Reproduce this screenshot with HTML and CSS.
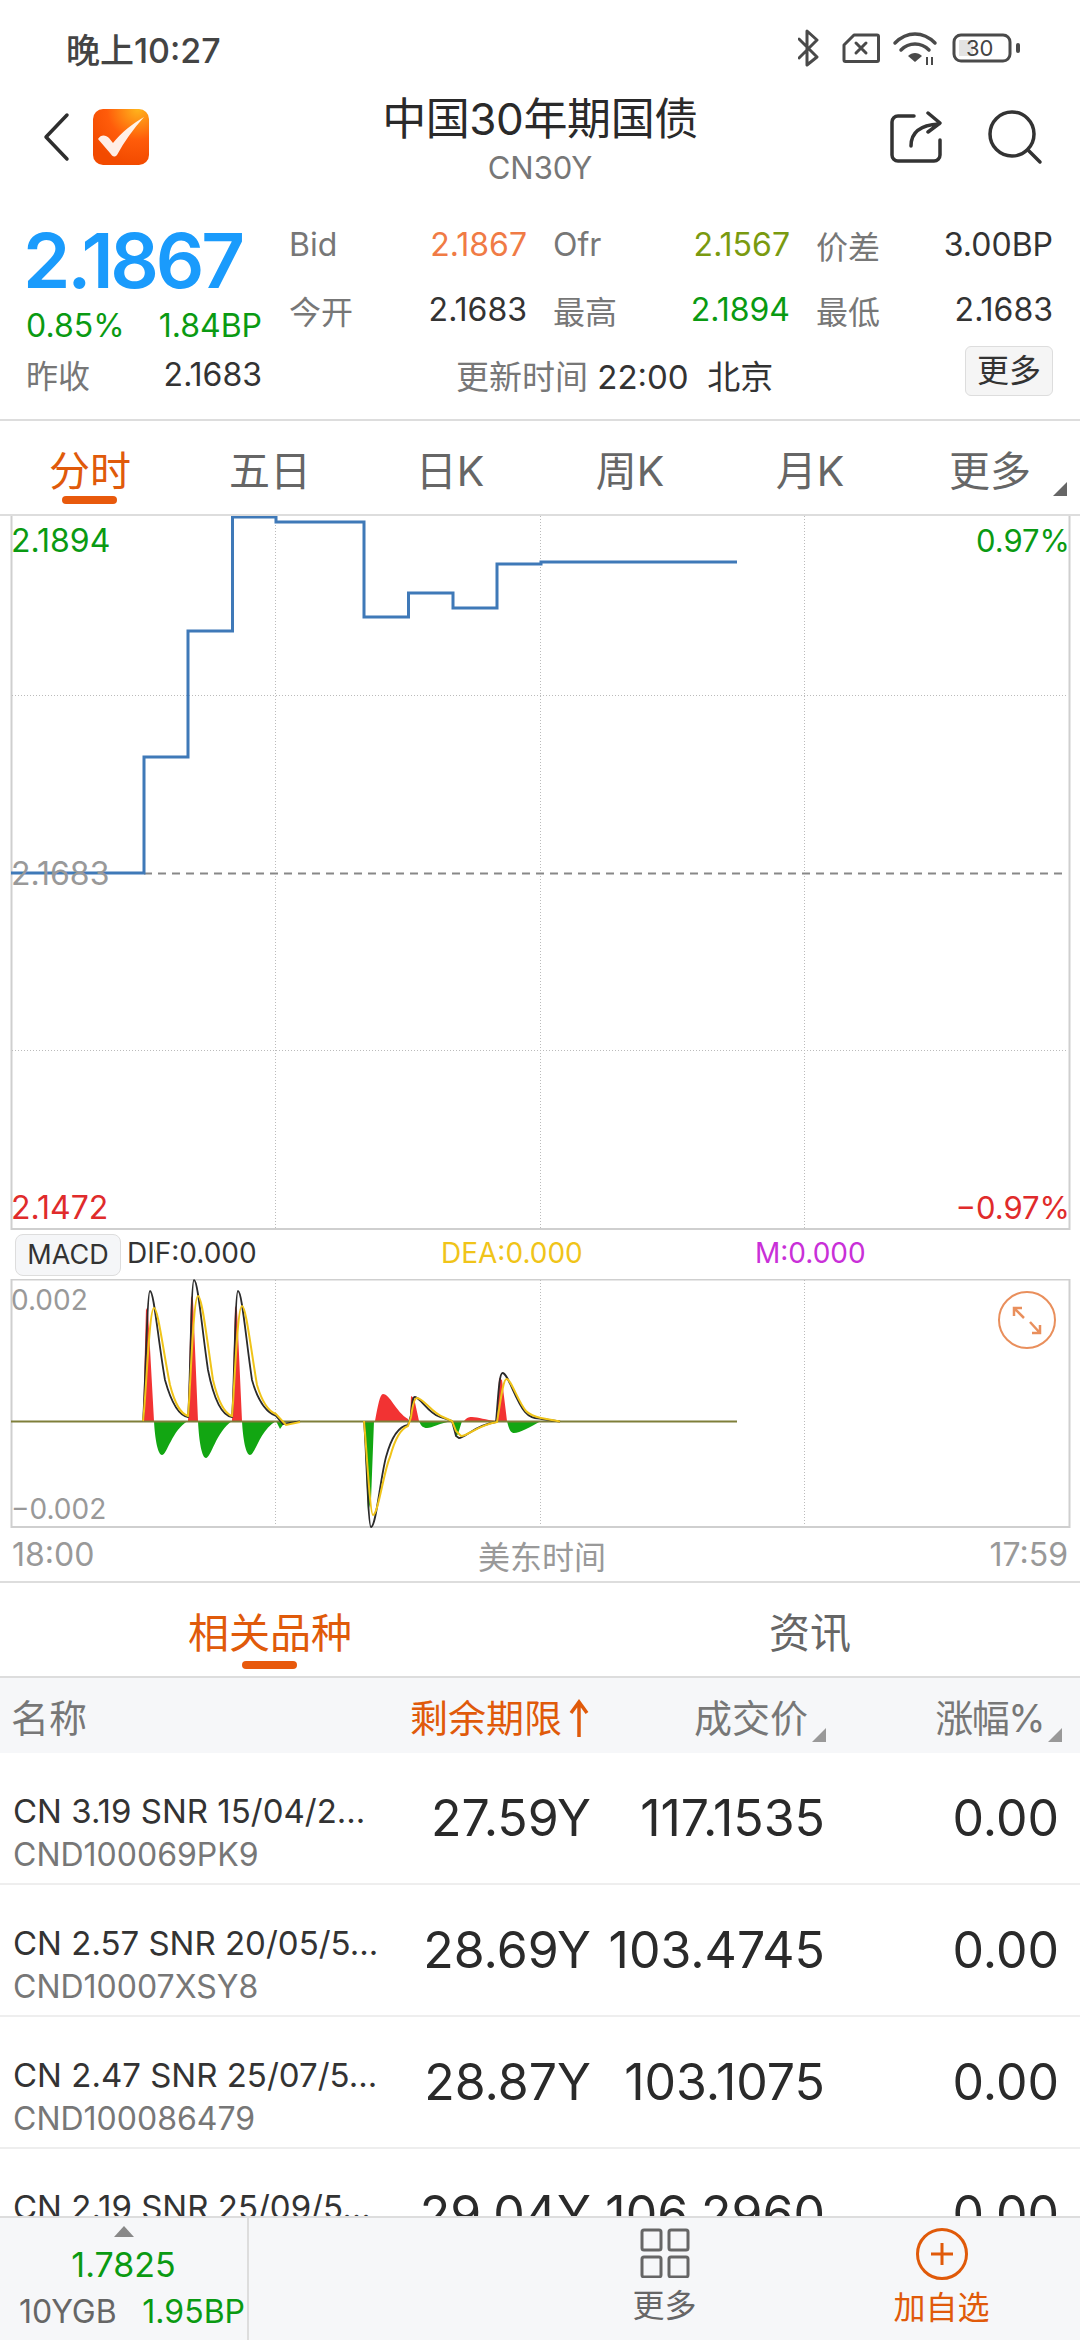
FILE: index.html
```html
<!DOCTYPE html>
<html lang="zh-CN">
<head>
    <meta charset="UTF-8">
    <meta name="viewport" content="width=device-width, initial-scale=1.0">
    <title>中国30年期国债</title>
    <link rel="stylesheet" href="styles.css">
</head>
<body>
<div class="page">
    <div class="status">
        <span class="status-time">晚上10:27</span>
        <svg class="status-icons" width="222" height="40" viewBox="798 28 222 40" fill="none" stroke="#4a4a4a" stroke-width="3">
            <path d="M799 39 L817 57 L807 65 V31 L817 40 L799 58" stroke-linejoin="round" stroke-linecap="round"/>
            <path d="M854 35 H877 a1.5 1.5 0 0 1 1.5 1.5 V60 a1.5 1.5 0 0 1 -1.5 1.5 H845.500 a1.500 1.500 0 0 1 -1.500 -1.500 V45 Z" stroke-linejoin="round"/>
            <path d="M856 43 L866 53 M866 43 L856 53" stroke-linecap="round"/>
            <path d="M895 43 C907 31 923 31 935 43" stroke-width="3.500" stroke-linecap="round"/>
            <path d="M901 50 C909 42 921 42 929 50" stroke-width="3.500" stroke-linecap="round"/>
            <path d="M908 56 L915 62 L922 56 C918 52 912 52 908 56 Z" fill="#4a4a4a" stroke="none"/>
            <path d="M927 57 V65 M932 57 V65" stroke-width="2"/>
            <rect x="954" y="35" width="56" height="26" rx="7"/>
            <rect x="959" y="40" width="14" height="16" fill="#e3e3e3" stroke="none"/>
            <rect x="1016" y="43" width="4" height="10" rx="2" fill="#4a4a4a" stroke="none"/>
        </svg>
        <span class="status-batt">30</span>
    </div>

    <div class="nav">
        <div class="nav-left">
            <svg width="30" height="50" viewBox="0 0 30 50" fill="none" stroke="#2e2e2e" stroke-width="3.500" stroke-linecap="round" stroke-linejoin="round">
                <path d="M24 3 L3 25 L24 47"/>
            </svg>
            <svg class="logo" width="56" height="56" viewBox="0 0 56 56">
                <defs>
                    <radialGradient id="logoBg" cx="0.8" cy="0" r="1">
                        <stop offset="0" stop-color="#ffb51c"/>
                        <stop offset="0.55" stop-color="#ff5c0a"/>
                        <stop offset="1" stop-color="#f24a00"/>
                    </radialGradient>
                </defs>
                <rect width="56" height="56" rx="10" fill="url(#logoBg)"/>
                <path d="M5 30 C8 25 13 26 16 29 L20 34 C29 23 39 15 51 8 C40 20 31 33 24 46 C21 49 19 47 17 44 C13 39 9 35 5 30 Z" fill="#fff" opacity="0.9"/>
            </svg>
        </div>
        <div class="nav-title">
            <div class="nav-name">中国30年期国债</div>
            <div class="nav-code">CN30Y</div>
        </div>
        <div class="nav-right">
            <svg width="52" height="52" viewBox="0 0 52 52" fill="none" stroke="#333" stroke-width="3.500" stroke-linecap="round" stroke-linejoin="round">
                <path d="M24 5 H8 a6 6 0 0 0 -6 6 V44 a6 6 0 0 0 6 6 H44 a6 6 0 0 0 6 -6 V29"/>
                <path d="M21 35 C21 22 30 14 49 13 M38 2 L50 12 L38 21"/>
            </svg>
            <svg width="56" height="56" viewBox="0 0 56 56" fill="none" stroke="#333" stroke-width="3.500" stroke-linecap="round">
                <circle cx="25" cy="25" r="22"/>
                <path d="M41 41 L53 53"/>
            </svg>
        </div>
    </div>

    <div class="quote">
        <div class="quote-left">
            <div class="last-price">2.1867</div>
            <div class="quote-pair up-text"><span>0.85%</span><span>1.84BP</span></div>
            <div class="quote-pair prev"><span class="lbl">昨收</span><span>2.1683</span></div>
        </div>
        <div class="quote-right">
            <div class="stat"><span class="lbl">Bid</span><span class="bid">2.1867</span></div>
            <div class="stat"><span class="lbl">Ofr</span><span class="ofr">2.1567</span></div>
            <div class="stat"><span class="lbl">价差</span><span>3.00BP</span></div>
            <div class="stat"><span class="lbl">今开</span><span>2.1683</span></div>
            <div class="stat"><span class="lbl">最高</span><span class="up-text">2.1894</span></div>
            <div class="stat"><span class="lbl">最低</span><span>2.1683</span></div>
            <div class="update-row">
                <span class="update-time"><span class="lbl">更新时间</span> 22:00&nbsp;&nbsp;北京</span>
                <span class="more-btn">更多</span>
            </div>
        </div>
    </div>

    <div class="period-tabs">
        <div class="tab active">分时</div>
        <div class="tab">五日</div>
        <div class="tab">日K</div>
        <div class="tab">周K</div>
        <div class="tab">月K</div>
        <div class="tab tab-more">更多</div>
    </div>

    <div class="price-chart">
        <svg class="chart-svg" width="1080" height="714" viewBox="0 516 1080 714" fill="none">
            <path d="M11.500 516 V1229 H1069.500 V516" stroke="#cfcfcf" stroke-width="2"/>
            <path d="M12 695.500 H1068 M12 1050.500 H1068 M275.500 516 V1228 M540.500 516 V1228 M804.500 516 V1228" stroke="#bbb" stroke-width="1" stroke-dasharray="1 2"/>
            <path d="M144 873.500 H1064" stroke="#888" stroke-width="2" stroke-dasharray="8 6"/>
            <path d="M11 873 H144 V757 H188 V631 H232.500 V517 H276 V522 H364 V617 H408.500 V593 H453 V608 H497 V564 H541 V562 H737" stroke="#3f79b8" stroke-width="3"/>
        </svg>
        <span class="chart-label hi-left">2.1894</span>
        <span class="chart-label hi-right">0.97%</span>
        <span class="chart-label mid-left">2.1683</span>
        <span class="chart-label lo-left">2.1472</span>
        <span class="chart-label lo-right">−0.97%</span>
    </div>

    <div class="macd-row">
        <span class="macd-btn">MACD</span>
        <span class="macd-val">DIF:0.000</span>
        <span class="macd-val dea">DEA:0.000</span>
        <span class="macd-val m">M:0.000</span>
    </div>

    <div class="macd-chart">
        <svg class="chart-svg" width="1080" height="249" viewBox="0 1279 1080 249" fill="none">
            <path d="M11.500 1528 V1279.500 H1069.500 V1528 M11 1527 H1070" stroke="#cfcfcf" stroke-width="2"/>
            <path d="M275.500 1280 V1526 M540.500 1280 V1526 M804.500 1280 V1526" stroke="#bbb" stroke-width="1" stroke-dasharray="1 2"/>
            <!-- red bars -->
            <path fill="#f23333" d="M143 1421 L146 1308 L148 1312 L154 1421 Z
                M188 1421 L191 1296 L193 1300 L198 1421 Z
                M232 1421 L235 1306 L237 1310 L242 1421 Z
                M375 1421 C378 1405 380 1394 383 1394 C390 1394 396 1412 408 1419 V1421 Z
                M410 1421 L411 1396 L414 1398 L419 1421 Z
                M464 1421 C467 1417 470 1417 472 1417 C478 1417 486 1420 496 1421 Z
                M497 1421 L499 1378 L502 1380 L507 1421 Z"/>
            <!-- green bars -->
            <path fill="#12a612" d="M154 1421 C155 1440 158 1455 162 1455 C167 1455 172 1430 188 1421 Z
                M198 1421 C199 1442 202 1458 206 1458 C211 1458 216 1432 232 1421 Z
                M242 1421 C243 1440 246 1455 250 1455 C255 1455 260 1430 276 1421 Z
                M276 1421 L280 1429 L285 1422 Z
                M364 1421 L368 1512 L371 1500 L374 1421 Z
                M419 1421 C421 1426 423 1428 427 1428 C432 1428 440 1423 452 1421 Z
                M453 1421 L456 1437 L458 1434 L462 1421 Z
                M507 1421 C509 1430 511 1433 514 1433 C520 1433 530 1427 541 1421 Z"/>
            <path d="M11 1421.500 H737" stroke="#7f7f3a" stroke-width="2"/>
            <!-- DIF -->
            <path stroke="#2b2b2b" stroke-width="1.800" d="M143 1421 C145 1400 147 1291 150 1291 C154 1291 158 1340 165 1380 C172 1405 180 1416 188 1417 C190 1400 191 1280 194 1280 C198 1280 202 1330 208 1370 C215 1405 224 1416 232 1417 C234 1400 235 1291 238 1291 C242 1291 246 1340 252 1380 C259 1405 268 1413 276 1416 L283 1424 L300 1421.500 M364 1421 C366 1440 368 1527 371 1527 C376 1527 380 1480 386 1457 C392 1435 400 1426 408 1425 L411 1415 C412 1400 413 1397 415 1397 C420 1397 428 1413 440 1417 L452 1421 L456 1436 L459 1438 C465 1438 475 1425 496 1422 C498 1400 499 1373 502.500 1373 C508 1373 515 1400 525 1412 C530 1418 535 1418 542 1419 L560 1421.500"/>
            <!-- DEA -->
            <path stroke="#f0c419" stroke-width="2" d="M143 1421 C146 1400 149 1308 154 1308 C158 1308 163 1350 170 1385 C176 1408 182 1414 188 1416 C190 1400 193 1296 198 1296 C202 1296 207 1340 213 1380 C219 1405 226 1414 232 1416 C234 1400 237 1306 242 1306 C246 1306 251 1350 257 1385 C263 1405 270 1412 276 1414 L286 1425 L300 1422 M364 1421 C366 1440 370 1515 373 1515 C378 1515 384 1470 390 1457 C396 1435 402 1428 408 1426 L411 1417 C413 1402 415 1398 417 1398 C423 1398 432 1413 443 1417 L452 1421 L456 1431 L461 1436 C468 1436 478 1425 497 1422 C500 1405 503 1379 506.500 1379 C511 1379 518 1402 526 1411 C531 1416 536 1417 541 1418 L560 1421.500"/>
            <!-- expand button -->
            <circle cx="1027" cy="1320" r="28" stroke="#e98f5c" stroke-width="2"/>
            <path d="M1014 1308 L1024 1318 M1014 1316 V1308 H1022 M1030 1322 L1040 1333 M1032 1333 H1040 V1325" stroke="#e98f5c" stroke-width="2.500"/>
        </svg>
        <span class="chart-label small macd-hi">0.002</span>
        <span class="chart-label small macd-lo">−0.002</span>
    </div>

    <div class="axis-row">
        <span>18:00</span>
        <span>美东时间</span>
        <span>17:59</span>
    </div>

    <div class="section-tabs">
        <div class="tab active">相关品种</div>
        <div class="tab">资讯</div>
    </div>

    <div class="table-head">
        <span>名称</span>
        <span class="th-right sorted">剩余期限<svg class="sort-arrow" width="20" height="38" viewBox="0 0 20 38" fill="none" stroke="#e05a0a" stroke-width="3.500"><path d="M10 38 V4 M2 14 L10 3 L18 14"/></svg></span>
        <span class="th-right th-sort">成交价</span>
        <span class="th-right th-sort th-pct">涨幅%</span>
    </div>

    <div class="table-body">
        <div class="row">
            <div class="row-name"><div>CN 3.19 SNR 15/04/2...</div><div class="row-code">CND100069PK9</div></div>
            <div class="row-num">27.59Y</div>
            <div class="row-num">117.1535</div>
            <div class="row-num">0.00</div>
        </div>
        <div class="row">
            <div class="row-name"><div>CN 2.57 SNR 20/05/5...</div><div class="row-code">CND10007XSY8</div></div>
            <div class="row-num">28.69Y</div>
            <div class="row-num">103.4745</div>
            <div class="row-num">0.00</div>
        </div>
        <div class="row">
            <div class="row-name"><div>CN 2.47 SNR 25/07/5...</div><div class="row-code">CND100086479</div></div>
            <div class="row-num">28.87Y</div>
            <div class="row-num">103.1075</div>
            <div class="row-num">0.00</div>
        </div>
        <div class="row">
            <div class="row-name"><div>CN 2.19 SNR 25/09/5...</div></div>
            <div class="row-num">29.04Y</div>
            <div class="row-num">106.2960</div>
            <div class="row-num">0.00</div>
        </div>
    </div>

    <div class="bottom-bar">
        <div class="ticker">
            <span class="ticker-arrow"></span>
            <div class="ticker-price up-text">1.7825</div>
            <div class="ticker-line"><span>10YGB</span><span class="up-text">1.95BP</span></div>
        </div>
        <div></div>
        <div class="bar-item">
            <svg width="50" height="50" viewBox="0 0 50 50" fill="none" stroke="#666" stroke-width="3">
                <rect x="2" y="2" width="19" height="20" rx="2"/>
                <rect x="29" y="2" width="19" height="20" rx="2"/>
                <rect x="2" y="29" width="19" height="20" rx="2"/>
                <rect x="29" y="29" width="19" height="20" rx="2"/>
            </svg>
            <span>更多</span>
        </div>
        <div class="bar-item orange">
            <svg width="52" height="52" viewBox="0 0 52 52" fill="none" stroke="#e05a0a" stroke-width="3">
                <circle cx="26" cy="26" r="24.500"/>
                <path d="M26 15 V37 M15 26 H37"/>
            </svg>
            <span>加自选</span>
        </div>
    </div>
</div>
</body>
</html>
```

FILE: styles.css
```css
* {
    box-sizing: border-box;
}

body {
    margin: 0;
    background: #fff;
    font-family: Inter, "Noto Sans CJK SC", sans-serif;
    color: #333;
}

.page {
    width: 1080px;
    height: 2340px;
    display: flex;
    flex-direction: column;
    overflow: hidden;
    position: relative;
}

.up-text {
    color: #0a9a12;
}

.lbl {
    color: #777;
}

/* status bar */
.status {
    height: 96px;
    flex: none;
    display: flex;
    align-items: center;
    justify-content: space-between;
    padding: 0 60px 0 66px;
    position: relative;
}

.status-time {
    font-size: 34px;
    font-weight: 500;
    color: #444;
}

.status-batt {
    position: absolute;
    left: 966px;
    top: 34px;
    font-size: 22px;
    line-height: 28px;
    color: #444;
}

/* title */
.nav {
    height: 100px;
    flex: none;
    display: grid;
    grid-template-columns: 1fr auto 1fr;
    align-items: center;
}

.nav-left {
    display: flex;
    align-items: center;
    gap: 20px;
    padding-left: 43px;
    margin-top: -18px;
}

.nav-right {
    display: flex;
    justify-content: flex-end;
    align-items: center;
    gap: 45px;
    padding-right: 37px;
    margin-top: -18px;
}

.nav-title {
    text-align: center;
    margin-top: -7px;
}

.nav-name {
    font-size: 44px;
    line-height: 44px;
    letter-spacing: -0.4px;
    color: #2a2a2a;
}

.nav-code {
    font-size: 31px;
    line-height: 40px;
    margin-top: 7px;
    color: #777;
}

/* quote */
.quote {
    height: 225px;
    flex: none;
    display: flex;
    gap: 27px;
    padding: 16px 27px 0 26px;
    border-bottom: 2px solid #ddd;
    font-size: 32px;
}

.quote-left {
    width: 236px;
    flex: none;
}

.last-price {
    height: 96px;
    line-height: 96px;
    margin-left: -3px;
    font-size: 76px;
    font-weight: 600;
    color: #1a9bfc;
    letter-spacing: -3.2px;
}

.quote-pair {
    display: flex;
    justify-content: space-between;
    align-items: center;
}

.quote-pair.up-text {
    height: 34px;
}

.quote-pair.prev {
    height: 64px;
}

.quote-right {
    flex: 1;
    display: grid;
    grid-template-columns: 238px 237px 237px;
    grid-auto-rows: 65px;
    column-gap: 26px;
}

.stat {
    display: flex;
    justify-content: space-between;
    align-items: center;
}

.bid {
    color: #f07b45;
}

.ofr {
    color: #7a9a10;
}

.update-row {
    grid-column: 1 / -1;
    display: flex;
    align-items: center;
    justify-content: space-between;
    padding-left: 167px;
}

.update-time {
    font-size: 33px;
}

.more-btn {
    width: 88px;
    height: 50px;
    line-height: 48px;
    margin-top: -8px;
    text-align: center;
    background: #f5f5f5;
    border: 1px solid #ddd;
    border-radius: 6px;
    color: #333;
}

/* tabs */
.period-tabs {
    height: 95px;
    flex: none;
    display: grid;
    grid-template-columns: repeat(6, 1fr);
    border-bottom: 2px solid #ddd;
}

.tab {
    position: relative;
    padding-top: 26px;
    text-align: center;
    font-size: 41px;
    line-height: 48px;
    color: #666;
}

.tab.active {
    color: #e05a0a;
}

.tab.active::after {
    content: "";
    position: absolute;
    left: 50%;
    bottom: 10px;
    width: 55px;
    height: 8px;
    margin-left: -28px;
    border-radius: 4px;
    background: #e8590c;
}

.tab-more::after {
    content: "";
    position: absolute;
    right: 13px;
    bottom: 18px;
    border-style: solid;
    border-width: 0 0 14px 14px;
    border-color: transparent transparent #666 transparent;
}

/* charts */
.price-chart {
    height: 714px;
    flex: none;
    position: relative;
}

.macd-chart {
    height: 249px;
    flex: none;
    position: relative;
}

.chart-svg {
    display: block;
}

.chart-label {
    position: absolute;
    font-size: 32px;
    line-height: 36px;
    color: #999;
}

.chart-label.small {
    font-size: 28px;
    line-height: 32px;
}

.hi-left {
    left: 11px;
    top: 7px;
    color: #0a9a12;
}

.hi-right {
    right: 10px;
    top: 7px;
    font-size: 31px;
    color: #0a9a12;
}

.mid-left {
    left: 11px;
    top: 340px;
}

.lo-left {
    left: 11px;
    top: 674px;
    color: #e02b2b;
}

.lo-right {
    right: 10px;
    top: 674px;
    font-size: 31px;
    color: #e02b2b;
}

.macd-hi {
    left: 11px;
    top: 5px;
}

.macd-lo {
    left: 11px;
    top: 214px;
}

.macd-row {
    height: 49px;
    flex: none;
    display: flex;
    align-items: center;
    padding-left: 15px;
    font-size: 28px;
}

.macd-btn {
    width: 106px;
    height: 42px;
    line-height: 40px;
    margin-right: 6px;
    text-align: center;
    font-size: 27px;
    background: #f5f6f8;
    border: 1px solid #ddd;
    border-radius: 8px;
}

.macd-val {
    width: 314px;
    margin-top: -3px;
}

.dea {
    color: #f0c419;
}

.m {
    color: #c930d8;
}

.axis-row {
    height: 55px;
    flex: none;
    display: flex;
    justify-content: space-between;
    align-items: center;
    padding: 0 12px;
    font-size: 32px;
    color: #999;
    border-bottom: 2px solid #ddd;
}

/* related list */
.section-tabs {
    height: 95px;
    flex: none;
    display: grid;
    grid-template-columns: 1fr 1fr;
    border-bottom: 2px solid #ddd;
}

.section-tabs .tab.active::after {
    bottom: 7px;
}

.table-head {
    height: 75px;
    flex: none;
    display: grid;
    grid-template-columns: 368px 210px 234px 234px;
    align-items: center;
    padding: 0 22px 0 11px;
    background: #f6f7f9;
    font-size: 38px;
    color: #777;
}

.th-right {
    display: flex;
    justify-content: flex-end;
    align-items: center;
    position: relative;
}

.sorted {
    color: #e05a0a;
}

.sort-arrow {
    margin-left: 7px;
    margin-top: 4px;
}

.th-sort {
    padding-right: 18px;
    margin-right: -3px;
}

.th-pct {
    margin-right: -5px;
    letter-spacing: -1.5px;
}

.th-sort::after {
    content: "";
    position: absolute;
    right: 0;
    bottom: 1px;
    border-style: solid;
    border-width: 0 0 14px 14px;
    border-color: transparent transparent #999 transparent;
}

.table-body {
    flex: 1;
    overflow: hidden;
}

.row {
    height: 132px;
    display: grid;
    grid-template-columns: 368px 210px 234px 234px;
    padding: 0 21px 0 13px;
    border-bottom: 2px solid #eee;
}

.row-name {
    padding-top: 36px;
    font-size: 33px;
    line-height: 44px;
    white-space: nowrap;
    color: #333;
}

.row-code {
    font-size: 32px;
    color: #777;
}

.row-num {
    align-self: center;
    text-align: right;
    font-size: 50px;
    color: #2a2a2a;
}

/* bottom bar */
.bottom-bar {
    height: 124px;
    flex: none;
    display: grid;
    grid-template-columns: 249px repeat(3, 1fr);
    background: #f6f7f9;
    border-top: 2px solid #ddd;
}

.ticker {
    position: relative;
    border-right: 2px solid #ddd;
    padding-top: 27px;
    text-align: center;
    font-size: 32px;
    color: #666;
}

.ticker-arrow {
    position: absolute;
    left: 114px;
    top: 8px;
    border-style: solid;
    border-width: 0 10px 11px 10px;
    border-color: transparent transparent #888 transparent;
}

.ticker-price {
    font-size: 34px;
    line-height: 40px;
}

.ticker-line {
    display: flex;
    justify-content: space-between;
    padding: 0 2px 0 19px;
    margin-top: 7px;
    line-height: 40px;
}

.bar-item {
    display: flex;
    flex-direction: column;
    align-items: center;
    padding-top: 10px;
    font-size: 32px;
    line-height: 40px;
    color: #666;
}

.bar-item span {
    margin-top: 8px;
}

.bar-item.orange {
    color: #e05a0a;
}
```
